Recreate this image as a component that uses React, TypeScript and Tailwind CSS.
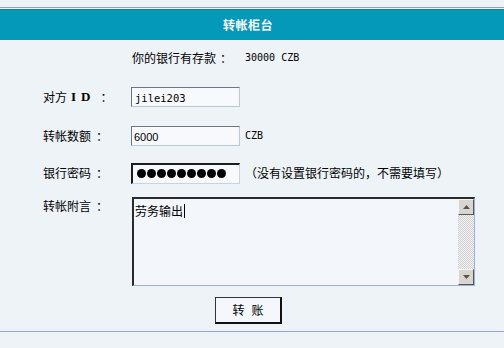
import React from "react";

function Label({ children }: { children: React.ReactNode }) {
  return (
    <div className="w-[131px] shrink-0 pl-[43px] flex items-center whitespace-nowrap">
      {children}
      <span className="ml-[5px]">：</span>
    </div>
  );
}

export default function App() {
  const dots = [0, 1, 2, 3, 4, 5, 6, 7, 8];
  return (
    <div className="w-[504px] h-[348px] bg-[#eef3f8] text-black text-[12px] leading-[14px] overflow-hidden font-['Noto_Sans_CJK_SC',sans-serif]">
      <div className="h-[7px]" />
      <div className="h-px bg-[#8e9dc6]" />
      <div className="h-px" />
      <div className="h-[31px] bg-[#0599b9] border-t border-[#0a84a4] flex items-center justify-center pr-[8px]">
        <span className="text-white font-bold text-[12px] leading-none tracking-[0.5px]">转帐柜台</span>
      </div>

      {/* balance row */}
      <div className="h-[35px] flex items-center pl-[132px] whitespace-nowrap">
        <span>你的银行有存款</span>
        <span className="ml-[4px]">：</span>
        <span className="ml-[13px] font-['DejaVu_Sans_Mono',monospace] text-[10px]">30000 CZB</span>
      </div>

      {/* ID */}
      <div className="mt-[12px] h-[20px] flex items-center">
        <Label>
          <span>对方</span>
          <span className="font-bold font-['Liberation_Serif',serif] text-[13px] ml-[4px] tracking-[5px]">ID</span>
        </Label>
        <div className="w-[109px] h-[20px] border border-t-[#6b7785] border-l-[#6b7785] border-r-[#b9c9dc] border-b-[#b9c9dc] bg-[#f7f9fc] flex items-center pl-[3px] pt-[2px] font-['DejaVu_Sans_Mono',monospace] text-[10.5px]">
          jilei203
        </div>
      </div>

      {/* amount */}
      <div className="mt-[19px] h-[20px] flex items-center">
        <Label>
          <span>转帐数额</span>
        </Label>
        <div className="w-[109px] h-[20px] border border-t-[#6b7785] border-l-[#6b7785] border-r-[#b9c9dc] border-b-[#b9c9dc] bg-[#f7f9fc] flex items-center pl-[2px] pt-[2px] font-['Liberation_Sans',sans-serif] text-[11px]">
          6000
        </div>
        <span className="ml-[5px] font-['DejaVu_Sans_Mono',monospace] text-[10px]">CZB</span>
      </div>

      {/* password */}
      <div className="mt-[17px] h-[20px] flex items-center">
        <Label>
          <span>银行密码</span>
        </Label>
        <div className="w-[109px] h-[21px] border-t-2 border-l-2 border-r border-b border-t-[#1d1d1d] border-l-[#1d1d1d] border-r-[#c6d3e2] border-b-[#c6d3e2] bg-[#f7f9fc] flex items-center pl-[4px] gap-[1px]">
          {dots.map((d) => (
            <span key={d} className="w-[9px] h-[9px] rounded-full bg-black" />
          ))}
        </div>
        <span className="ml-[5px] whitespace-nowrap">（没有设置银行密码的，不需要填写）</span>
      </div>

      {/* message */}
      <div className="mt-[14px] flex items-start">
        <div className="pt-[2px] h-[14px]">
          <Label>
            <span>转帐附言</span>
          </Label>
        </div>
        <div className="w-[343px] h-[89px] ml-px border-t-2 border-l-2 border-r border-b border-t-[#2a2a2a] border-l-[#2a2a2a] border-r-[#9fb0d8] border-b-[#9fb0d8] bg-[#f3f6fa] flex">
          <div className="flex-1 pl-[1px] pt-[5px] flex items-start">
            <span>劳务输出</span>
            <span className="w-px h-[14px] bg-black ml-px" />
          </div>
          <div className="w-[16px] flex flex-col">
            <div className="h-[16px] bg-[#d9d6cf] border border-t-[#f4f4f4] border-l-[#f4f4f4] border-r-[#555] border-b-[#555] flex items-center justify-center">
              <svg width="7" height="4" viewBox="0 0 7 4"><path d="M0 4 L3.5 0 L7 4 Z" fill="#555" /></svg>
            </div>
            <div className="flex-1 bg-[repeating-conic-gradient(#cfcfcf_0_25%,#f4f4f4_0_50%)] bg-[length:2px_2px]" />
            <div className="h-[16px] bg-[#d9d6cf] border border-t-[#f4f4f4] border-l-[#f4f4f4] border-r-[#555] border-b-[#555] flex items-center justify-center">
              <svg width="7" height="4" viewBox="0 0 7 4"><path d="M0 0 L3.5 4 L7 0 Z" fill="#555" /></svg>
            </div>
          </div>
        </div>
      </div>

      {/* button */}
      <div className="mt-[11px] h-[27px] pl-[215px] flex">
        <button className="w-[67px] h-[27px] border border-t-[#333] border-l-[#333] border-r-2 border-b-2 border-r-[#111] border-b-[#111] bg-[#f4f7fc] flex items-center justify-center gap-[7px] text-[12px] leading-none">
          <span>转</span>
          <span>账</span>
        </button>
      </div>

      <div className="mt-[7px] h-px bg-[#97a5cf]" />
    </div>
  );
}
